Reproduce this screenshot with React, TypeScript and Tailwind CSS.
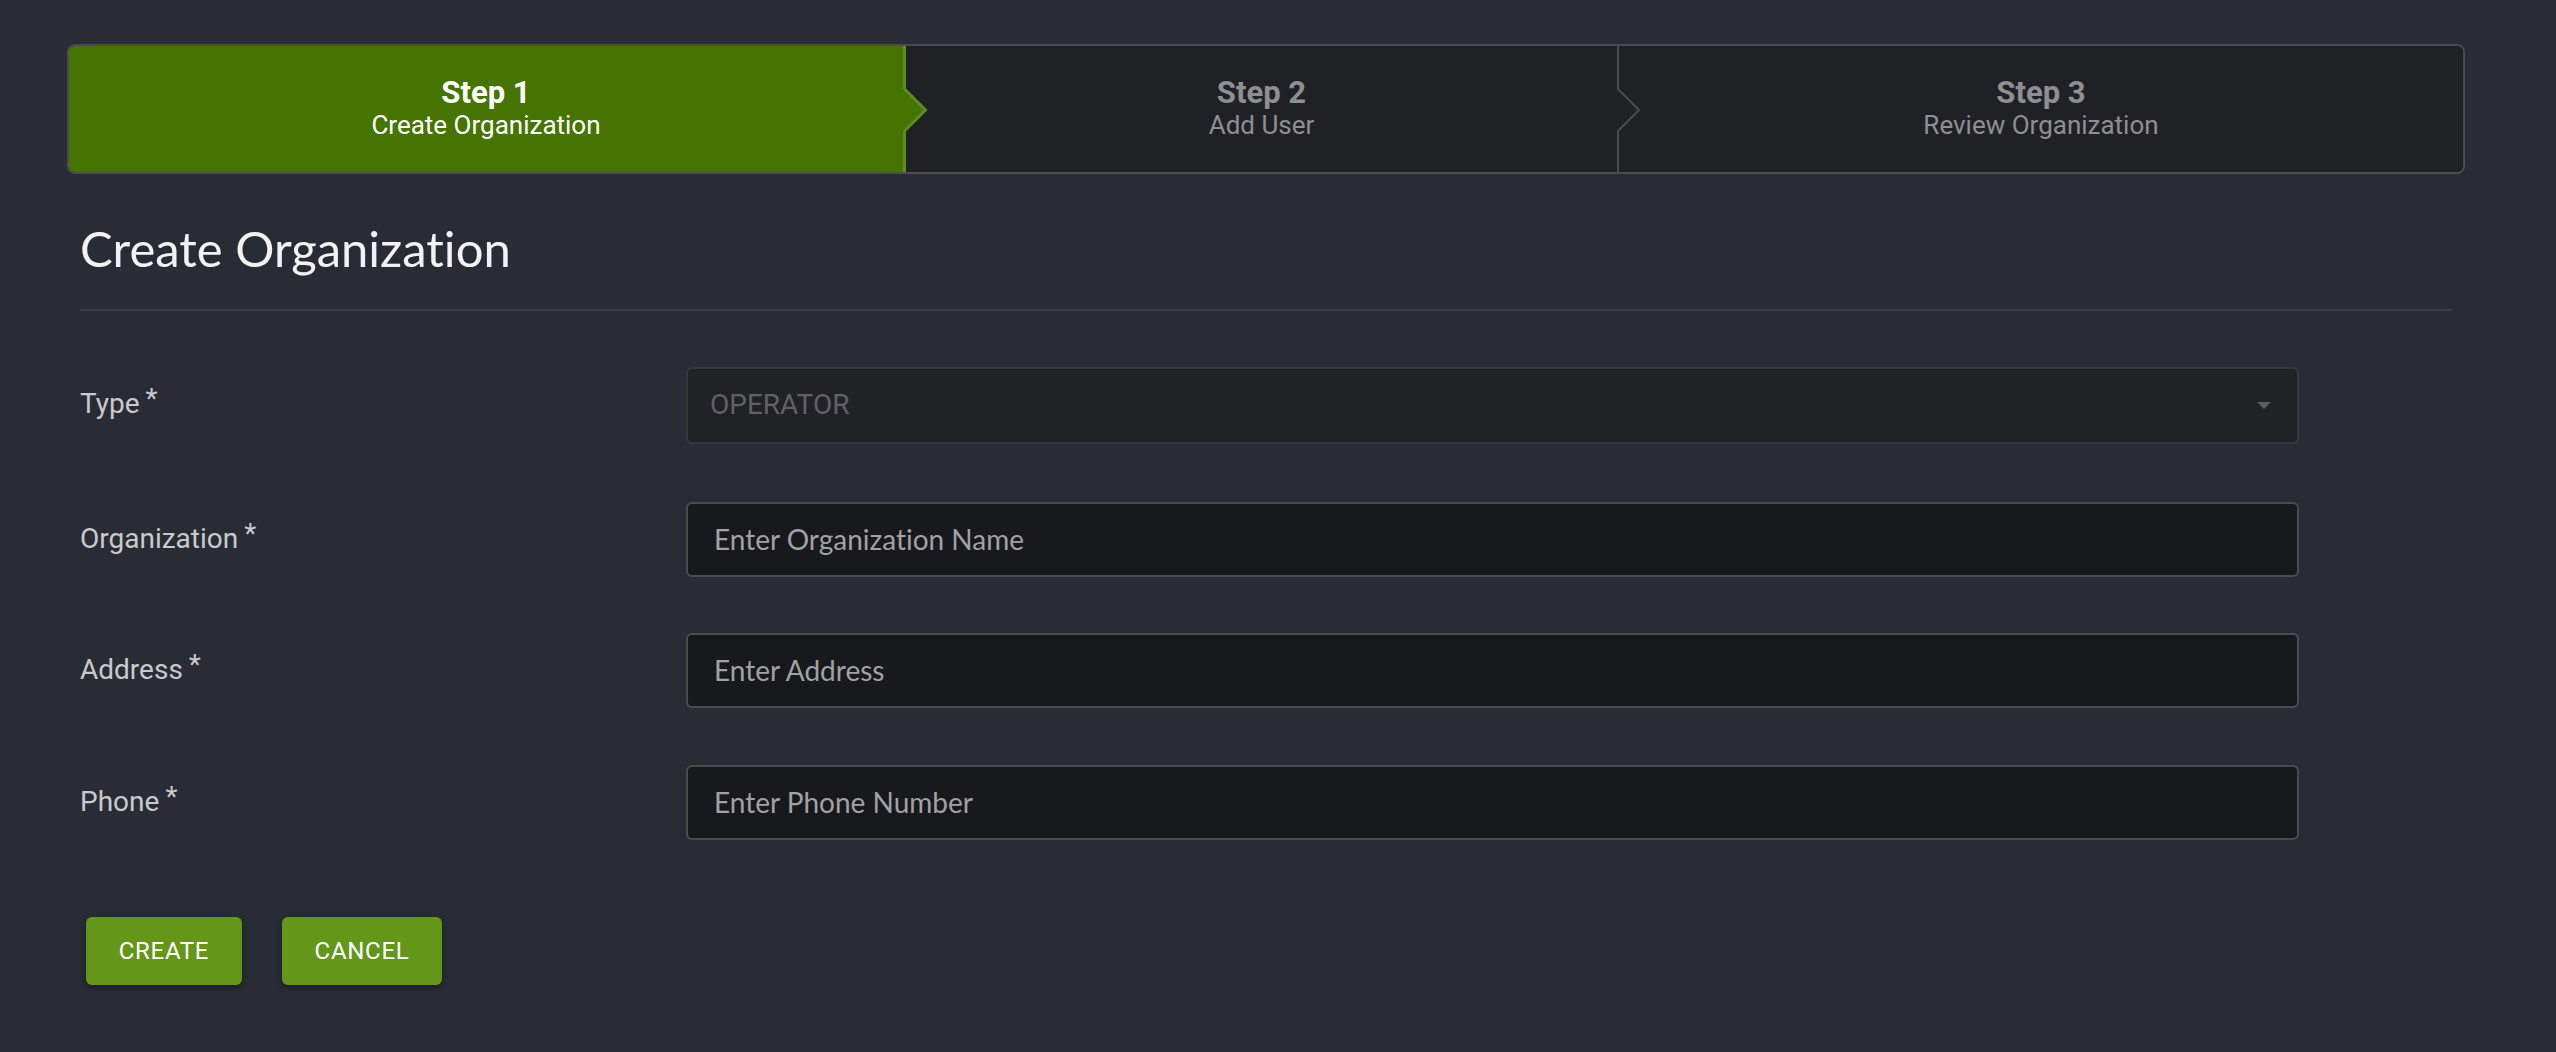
import React from "react"

const steps = [
  { n: 1, label: "Create Organization", active: true },
  { n: 2, label: "Add User", active: false },
  { n: 3, label: "Review Organization", active: false },
]

function Chevron({ active }: { active: boolean }) {
  const fill = active ? "#457500" : "#202125"
  const stroke = active ? "#5e8c24" : "#4b4c50"
  const bw = active ? 3 : 2
  const x = bw / 2
  return (
    <svg className="absolute left-full top-0 z-10 h-[126px] w-[26px]" viewBox="0 0 26 126">
      <polygon points={`0,43 ${x},43 ${x + 21},64 ${x},85 0,85`} fill={fill} />
      <polyline points={`${x},43 ${x + 21},64 ${x},85`} fill="none" stroke={stroke} strokeWidth={bw} />
    </svg>
  )
}

function Stepper() {
  return (
    <div className="flex h-[130px] overflow-hidden rounded-lg border-2 border-[#4b4c50]">
      {steps.map((s, i) => {
        const last = i === steps.length - 1
        const width = i === 0 ? "w-[837px]" : i === 1 ? "w-[713px]" : "flex-1"
        const skin = s.active
          ? "bg-[#457500] border-r-[3px] border-[#5e8c24] text-white"
          : last
            ? "bg-[#202125] text-[#8e8f92]"
            : "bg-[#202125] border-r-2 border-[#4b4c50] text-[#8e8f92]"
        return (
          <div key={s.n} className={`relative flex shrink-0 flex-col items-center justify-center pb-[4px] ${width} ${skin}`}>
            <div className="text-[31px] font-bold leading-[36px]">Step {s.n}</div>
            <div className="text-[26px] leading-[28px]">{s.label}</div>
            {!last && <Chevron active={s.active} />}
          </div>
        )
      })}
    </div>
  )
}

function Label({ text }: { text: string }) {
  return (
    <div className="w-[606px] shrink-0 pt-[20px] text-[28px] leading-[33px] text-[#c9cacc]">
      {text}
      <span className="relative -top-[5px] ml-[6px] inline-block">*</span>
    </div>
  )
}

function TextRow({ label, placeholder, top }: { label: string; placeholder: string; top: string }) {
  return (
    <div className={`flex ${top}`}>
      <Label text={label} />
      <input
        placeholder={placeholder}
        className="h-[75px] w-[1613px] rounded-md border-2 border-[#4b4c50] bg-[#18191c] pl-[26px] font-[Lato,sans-serif] text-[28px] text-[#e0e0e0] outline-none [font-variant-ligatures:none] placeholder:text-[#a1a2a4]"
      />
    </div>
  )
}

export default function App() {
  return (
    <div className="min-h-screen bg-[#292c35] pl-[67px] pr-[91px] pt-[44px] font-[Roboto,sans-serif]">
      <Stepper />

      <div className="px-[13px]">
        <h1 className="mt-[45px] font-[Lato,sans-serif] text-[49px] leading-[1.2] text-[#f2f2f2] [font-variant-ligatures:none]">
          Create Organization
        </h1>
        <div className="mt-[31px] h-[2px] bg-[#3a3c42]" />

        {/* type select (disabled) */}
        <div className="mt-[56px] flex">
          <Label text="Type" />
          <div className="flex h-[77px] w-[1613px] items-center justify-between rounded-md border-2 border-[#36373b] bg-[#212226] pl-[22px] pr-[26px]">
            <span className="text-[28px] text-[#606165]">OPERATOR</span>
            <svg className="h-[7px] w-[14px]" viewBox="0 0 14 7">
              <polygon points="0,0 14,0 7,7" fill="#5c5d61" />
            </svg>
          </div>
        </div>

        <TextRow label="Organization" placeholder="Enter Organization Name" top="mt-[58px]" />
        <TextRow label="Address" placeholder="Enter Address" top="mt-[56px]" />
        <TextRow label="Phone" placeholder="Enter Phone Number" top="mt-[57px]" />

        <div className="ml-[6px] mt-[77px] flex gap-[40px]">
          <button className="flex h-[68px] w-[156px] items-center justify-center rounded-[6px] bg-[#64961a] text-[24px] tracking-[0.03em] text-white shadow-[0_3px_6px_rgba(0,0,0,0.35)]">
            CREATE
          </button>
          <button className="flex h-[68px] w-[160px] items-center justify-center rounded-[6px] bg-[#64961a] text-[24px] tracking-[0.03em] text-white shadow-[0_3px_6px_rgba(0,0,0,0.35)]">
            CANCEL
          </button>
        </div>
      </div>
    </div>
  )
}
